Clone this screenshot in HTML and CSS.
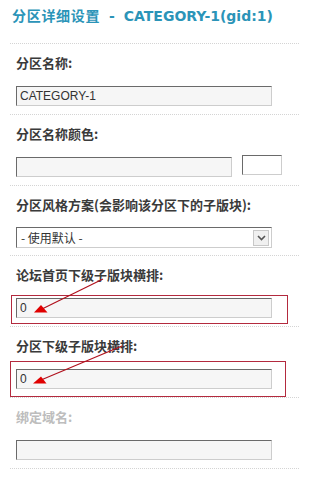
FILE: index.html
```html
<!DOCTYPE html>
<html lang="zh-CN">
<head>
<meta charset="utf-8">
<title>分区详细设置</title>
<link rel="stylesheet" href="styles.css">
</head>
<body>
<div class="page">
  <h3 class="title"><span class="title-cn">分区详细设置</span> - CATEGORY-1(gid:1)</h3>

  <div class="row">
    <div class="label">分区名称:</div>
    <div class="field"><input class="txt" type="text" value="CATEGORY-1"></div>
  </div>

  <div class="row">
    <div class="label">分区名称颜色:</div>
    <div class="field color-field">
      <input class="txt txt-short" type="text" value="">
      <span class="swatch"></span>
    </div>
  </div>

  <div class="row">
    <div class="label">分区风格方案(会影响该分区下的子版块):</div>
    <div class="field">
      <div class="select">
        <span class="select-text">- 使用默认 -</span>
        <span class="select-btn">
          <svg width="9" height="6" viewBox="0 0 9 6"><path d="M1 1 L4.5 4.5 L8 1" fill="none" stroke="#555" stroke-width="1.6"/></svg>
        </span>
      </div>
    </div>
  </div>

  <div class="row">
    <div class="label">论坛首页下级子版块横排:</div>
    <div class="field"><input class="txt" type="text" value="0"></div>
    <span class="mark mark-1"></span>
  </div>

  <div class="row">
    <div class="label">分区下级子版块横排:</div>
    <div class="field"><input class="txt" type="text" value="0"></div>
    <span class="mark mark-2"></span>
  </div>

  <div class="row row-last">
    <div class="label label-disabled">绑定域名:</div>
    <div class="field"><input class="txt" type="text" value=""></div>
  </div>

  <svg class="arrows" width="299" height="479" viewBox="0 0 299 479">
    <line x1="103" y1="279" x2="42" y2="309" stroke="#b0101c" stroke-width="1.2"/>
    <polygon points="34,312.5 41,305 47.5,312.5" fill="#e00000"/>
    <line x1="122" y1="346" x2="41" y2="380" stroke="#b0101c" stroke-width="1.2"/>
    <polygon points="33,383.5 41,376.5 46.5,383.5" fill="#e00000"/>
  </svg>
</div>
</body>
</html>
```

FILE: styles.css
```css
html, body {
  margin: 0;
  padding: 0;
  background: #fff;
}

.page {
  position: relative;
  width: 299px;
  height: 479px;
  overflow: hidden;
  font-family: "Liberation Sans", "Noto Sans CJK SC", sans-serif;
}

.title {
  margin: 0;
  padding: 7px 0 0 12px;
  height: 43px;
  box-sizing: border-box;
  font-family: "DejaVu Sans", "Noto Sans CJK SC", sans-serif;
  font-size: 14px;
  line-height: 18px;
  font-weight: bold;
  color: #2b94b8;
  white-space: nowrap;
  word-spacing: 4px;
}

.title-cn {
  letter-spacing: 0.7px;
}

.row {
  position: relative;
  margin-left: 10px;
  padding: 11px 0 8px 6px;
  border-top: 1px dotted #d4d4d4;
}

.row-last {
  border-bottom: 1px dotted #d4d4d4;
}

.label {
  height: 16px;
  line-height: 16px;
  margin-bottom: 15px;
  font-family: "Noto Sans CJK SC", sans-serif;
  font-size: 13px;
  font-weight: bold;
  color: #3a3a3a;
  white-space: nowrap;
}

.label-disabled {
  color: #bdbdbd;
}

.field {
  height: 20px;
}

.txt {
  display: block;
  width: 256px;
  height: 20px;
  margin: 0;
  padding: 0 3px;
  box-sizing: border-box;
  border: 1px solid;
  border-color: #6a6a6a #cdcdcd #cdcdcd #6a6a6a;
  background: #f6f6f6;
  font-family: "Liberation Sans", sans-serif;
  font-size: 12px;
  color: #333;
  outline: none;
}

.color-field {
  display: flex;
  align-items: flex-start;
  gap: 10px;
}

.txt-short {
  width: 216px;
}

.swatch {
  display: block;
  width: 40px;
  height: 20px;
  margin-top: -2px;
  box-sizing: border-box;
  border: 1px solid;
  border-color: #6a6a6a #cdcdcd #cdcdcd #6a6a6a;
  background: #fff;
}

.select {
  display: flex;
  align-items: center;
  justify-content: space-between;
  width: 256px;
  height: 21px;
  margin-top: -1px;
  padding: 0 2px 0 4px;
  box-sizing: border-box;
  border: 1px solid;
  border-color: #6a6a6a #cdcdcd #cdcdcd #6a6a6a;
  background: #fff;
  font-family: "Noto Sans CJK SC", sans-serif;
  font-size: 12px;
  color: #333;
}

.select-btn {
  display: flex;
  align-items: center;
  justify-content: center;
  width: 16px;
  height: 16px;
  box-sizing: border-box;
  border: 1px solid #c8c8c8;
  background: #f0f0f0;
}

.mark {
  position: absolute;
  border: 1px solid #b32a3e;
}

.mark-1 {
  left: 1px;
  top: 39px;
  width: 275px;
  height: 27px;
}

.mark-2 {
  left: 0;
  top: 34px;
  width: 274px;
  height: 34px;
}

.arrows {
  position: absolute;
  left: 0;
  top: 0;
  pointer-events: none;
}
```
